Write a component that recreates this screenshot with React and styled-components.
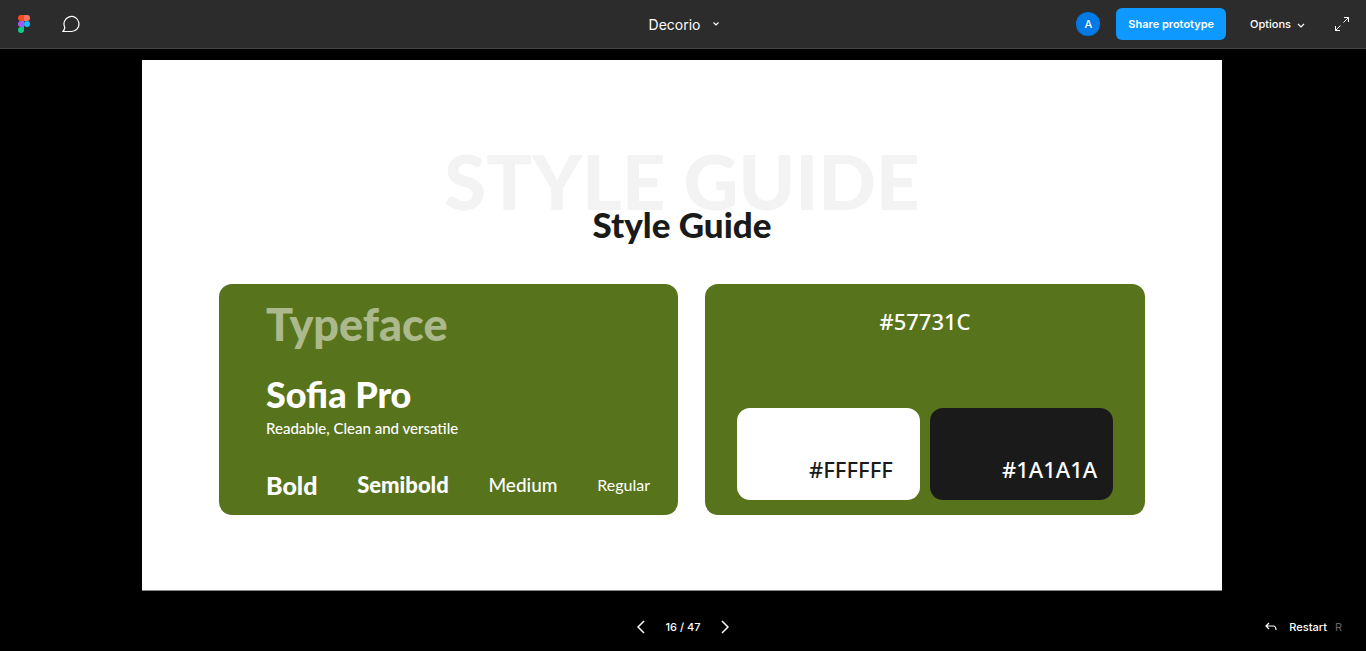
import React from "react";
import styled, { createGlobalStyle } from "styled-components";

const GlobalStyle = createGlobalStyle`
  * { box-sizing: border-box; }
  body {
    margin: 0;
    background: #000;
    color: #fff;
    font-family: Inter, "Liberation Sans", sans-serif;
    font-size: 11px;
  }
  #root { min-height: 100vh; display: flex; }
`;

const display = `Lato, "Open Sans", sans-serif`;

const Page = styled.div`
  flex: 1;
  display: flex;
  flex-direction: column;
`;

const Toolbar = styled.header`
  display: grid;
  grid-template-columns: 1fr auto 1fr;
  align-items: center;
  height: 49px;
  background: #2c2c2c;
  border-bottom: 1px solid #444;
`;

const ToolGroup = styled.div`
  display: flex;
  align-items: center;
  justify-content: ${(p) => (p.$end ? "flex-end" : "flex-start")};
`;

const IconButton = styled.button`
  display: flex;
  align-items: center;
  justify-content: center;
  width: ${(p) => p.$width}px;
  height: 48px;
  padding: 0;
  border: 0;
  background: none;
  color: #fff;
`;

const TextButton = styled.button`
  display: flex;
  align-items: center;
  gap: ${(p) => p.$gap}px;
  padding: 0;
  border: 0;
  background: none;
  color: #fff;
  font: 500 11px / 16px Inter, sans-serif;
`;

const FileButton = styled(TextButton)`
  padding: 2px 0 0 3px;
  font-size: 14px;
  font-weight: 400;
`;

const Avatar = styled.span`
  width: 24px;
  height: 24px;
  margin-right: 16px;
  border-radius: 50%;
  background: #007be5;
  font-weight: 500;
  line-height: 24px;
  text-align: center;
`;

const ShareButton = styled.button`
  height: 32px;
  margin-right: 24px;
  padding: 0 12px;
  border: 0;
  border-radius: 6px;
  background: #0d99ff;
  color: #fff;
  font: 600 11px / 16px Inter, sans-serif;
`;

const FullScreenButton = styled(IconButton)`
  justify-content: flex-end;
  padding-right: 16px;
`;

const Stage = styled.main`
  flex: 1;
  padding: 11px 144px 0 142px;
`;

const Slide = styled.section`
  padding: 95px 77px 75px;
  border-bottom: 1px solid #888;
  background: #fff;
  font-family: ${display};
`;

const Heading = styled.div`
  display: flex;
  flex-direction: column;
  align-items: center;
  margin-bottom: 42px;
  white-space: nowrap;
`;

const Backdrop = styled.span`
  color: #f3f3f3;
  font-size: 76px;
  font-weight: 900;
  line-height: 52px;
`;

const Title = styled.h1`
  margin: 0;
  color: #1a1a1a;
  font-size: 35px;
  font-weight: 900;
  line-height: 35px;
`;

const Panels = styled.div`
  display: grid;
  grid-template-columns: 459fr 440fr;
  gap: 27px;
`;

const Panel = styled.article`
  display: flex;
  flex-direction: column;
  min-height: 231px;
  padding: ${(p) => p.$padding};
  border-radius: 13px;
  background: #57731c;
`;

const PanelTitle = styled.h2`
  margin: 0 0 26px;
  color: rgba(255, 255, 255, 0.5);
  font-size: 45px;
  font-weight: 900;
  line-height: 48px;
`;

const FontName = styled.h3`
  margin: 0;
  font-size: 36px;
  font-weight: 900;
  line-height: 40px;
`;

const FontNote = styled.p`
  margin: 4px 0 31px;
  font-size: 15px;
  font-weight: 500;
  line-height: 20px;
`;

const Weights = styled.div`
  display: flex;
  align-items: center;
  justify-content: space-between;
  line-height: 32px;
`;

const Weight = styled.span`
  font-size: ${(p) => p.$size}px;
  font-weight: ${(p) => p.$weight};
`;

const HexCode = styled.span`
  font: 500 22px / 30px "Noto Sans", sans-serif;
`;

const MainColour = styled.div`
  margin-bottom: 72px;
  text-align: center;
`;

const Swatches = styled.div`
  display: grid;
  grid-template-columns: 1fr 1fr;
  gap: 10px;
`;

const Swatch = styled.div`
  height: 92px;
  padding: 46px 0 0 72px;
  border-radius: 13px;
  background: ${(p) => p.$fill};
  color: ${(p) => p.$ink};
`;

const Footer = styled.footer`
  display: grid;
  grid-template-columns: 1fr auto 1fr;
  align-items: center;
  height: 48px;
`;

const Pager = styled.nav`
  grid-column: 2;
  display: flex;
  align-items: center;
  font-weight: 500;
`;

const Count = styled.span`
  width: 36px;
  text-align: center;
  white-space: nowrap;
`;

const Restart = styled.div`
  display: flex;
  justify-content: flex-end;
  padding-right: 24px;
`;

const Shortcut = styled.kbd`
  margin-left: -4px;
  color: #6d6470;
  font: 400 11px / 16px Inter, sans-serif;
`;

const Line = ({ w, h, d, sw = 1 }) => (
  <svg width={w} height={h} viewBox={`0 0 ${w} ${h}`} fill="none" stroke="currentColor" strokeWidth={sw} aria-hidden="true">
    <path d={d} />
  </svg>
);

const FigmaLogo = () => (
  <svg width="12" height="18" viewBox="0 0 12 18" aria-hidden="true">
    <path d="M3 0h3v6H3a3 3 0 0 1 0-6z" fill="#f24e1e" />
    <path d="M6 0h3a3 3 0 0 1 0 6H6z" fill="#ff7262" />
    <path d="M3 6h3v6H3a3 3 0 0 1 0-6z" fill="#a259ff" />
    <circle cx="9" cy="9" r="3" fill="#1abcfe" />
    <path d="M3 12h3v3a3 3 0 1 1-3-3z" fill="#0acf83" />
  </svg>
);

const WEIGHTS = [
  { name: "Bold", size: 25, weight: 900 },
  { name: "Semibold", size: 22, weight: 900 },
  { name: "Medium", size: 19, weight: 500 },
  { name: "Regular", size: 16, weight: 400 },
];

export default function App() {
  return (
    <>
      <GlobalStyle />
      <Page>
        <Toolbar>
          <ToolGroup>
            <IconButton $width={48} aria-label="Figma">
              <FigmaLogo />
            </IconButton>
            <IconButton $width={46} aria-label="Comments">
              <Line w={18} h={18} sw={1.2} d="M1 16.500H9.500A7.500 7.500 0 1 0 2.800 12.400Q2.500 15 1 16.500Z" />
            </IconButton>
          </ToolGroup>
          <FileButton $gap={12}>
            Decorio
            <Line w={8} h={8} d="M1.500 1.500l2.500 2.500 2.500-2.500" sw={1.2} />
          </FileButton>
          <ToolGroup $end>
            <Avatar>A</Avatar>
            <ShareButton>Share prototype</ShareButton>
            <TextButton $gap={6}>
              Options
              <Line w={8} h={8} d="M1 4l3 3 3-3" sw={1.2} />
            </TextButton>
            <FullScreenButton $width={61} aria-label="Full screen">
              <Line w={16} h={16} d="M10 1.500h4.500V6M14.500 1.500L9.500 6.500M1.500 10v4.500H6M1.500 14.500L6.500 9.500" />
            </FullScreenButton>
          </ToolGroup>
        </Toolbar>
        <Stage>
          <Slide>
            <Heading>
              <Backdrop>STYLE GUIDE</Backdrop>
              <Title>Style Guide</Title>
            </Heading>
            <Panels>
              <Panel $padding="16px 28px 0 47px">
                <PanelTitle>Typeface</PanelTitle>
                <FontName>Sofia Pro</FontName>
                <FontNote>Readable, Clean and versatile</FontNote>
                <Weights>
                  {WEIGHTS.map((w) => (
                    <Weight key={w.name} $size={w.size} $weight={w.weight}>
                      {w.name}
                    </Weight>
                  ))}
                </Weights>
              </Panel>
              <Panel $padding="22px 32px 15px">
                <MainColour>
                  <HexCode>#57731C</HexCode>
                </MainColour>
                <Swatches>
                  <Swatch $fill="#fff" $ink="#1a1a1a">
                    <HexCode>#FFFFFF</HexCode>
                  </Swatch>
                  <Swatch $fill="#1a1a1a" $ink="#fff">
                    <HexCode>#1A1A1A</HexCode>
                  </Swatch>
                </Swatches>
              </Panel>
            </Panels>
          </Slide>
        </Stage>
        <Footer>
          <Pager aria-label="Slides">
            <IconButton $width={48} aria-label="Previous">
              <Line w={8} h={14} d="M7 1L1 7l6 6" sw={1.5} />
            </IconButton>
            <Count>16 / 47</Count>
            <IconButton $width={48} aria-label="Next">
              <Line w={8} h={14} d="M1 1l6 6-6 6" sw={1.5} />
            </IconButton>
          </Pager>
          <Restart>
            <TextButton $gap={12}>
              <Line w={12} h={10} d="M4 1L1 4l3 3M1 4h7q3 0 3 4" sw={1.2} />
              Restart
              <Shortcut>R</Shortcut>
            </TextButton>
          </Restart>
        </Footer>
      </Page>
    </>
  );
}
